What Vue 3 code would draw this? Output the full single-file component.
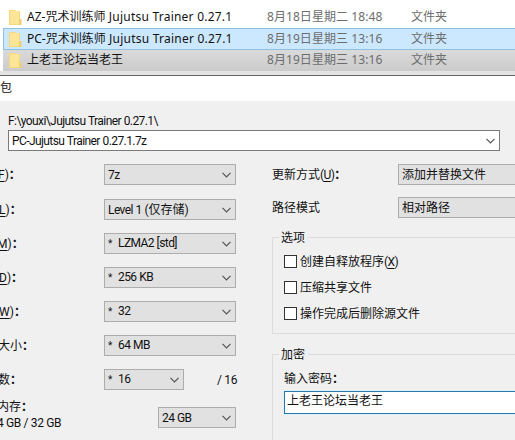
<template>
  <div class="screen">
    <div class="explorer">
      <div v-for="file in files" :key="file.name" class="file-row" :class="file.state">
        <svg class="folder" width="13" height="16" viewBox="0 0 13 16">
          <path d="M0 1h6l1 1h4v14H0z" fill="#f5d77e" />
          <path d="M1 2h9v13H1z" fill="#fce596" />
          <path d="M10 10h2.5v6H10z" fill="#efcf72" />
        </svg>
        <span class="file-name">{{ file.name }}<span class="file-latin">{{ file.latin }}</span></span>
        <span class="file-date">{{ file.date }}</span>
        <span class="file-type">文件夹</span>
      </div>
    </div>

    <div class="dialog">
      <div class="title-bar">包</div>

      <div class="archive">
        <div class="archive-path latin">F:\youxi\Jujutsu Trainer 0.27.1\</div>
        <div class="combo archive-name">
          <span class="latin">PC-Jujutsu Trainer 0.27.1.7z</span>
          <svg class="chevron" width="9" height="6" viewBox="0 0 9 6"><path d="M.5 .8l4 4 4-4" /></svg>
        </div>
      </div>

      <div class="columns">
        <div class="left">
          <div v-for="item in settings" :key="item.value" class="setting">
            <div class="setting-label" :style="{ marginLeft: item.offset + 'px' }">
              <u v-if="item.key">{{ item.key }}</u>{{ item.label }}<b>：</b>
            </div>
            <div class="combo" :class="{ short: item.suffix }">
              <span><i v-if="item.auto">*</i><span class="latin">{{ item.value }}</span><span v-if="item.note">({{ item.note }})</span></span>
              <svg class="chevron" width="9" height="6" viewBox="0 0 9 6"><path d="M.5 .8l4 4 4-4" /></svg>
            </div>
            <span v-if="item.suffix" class="suffix">{{ item.suffix }}</span>
          </div>

          <div class="memory">
            <div class="memory-label">
              <div>内存<b>：</b></div>
              <div class="memory-usage">4 GB / 32 GB</div>
            </div>
            <div class="combo memory-combo">
              <span class="latin">24 GB</span>
              <svg class="chevron" width="9" height="6" viewBox="0 0 9 6"><path d="M.5 .8l4 4 4-4" /></svg>
            </div>
          </div>
        </div>

        <div class="right">
          <div class="mode">
            <div class="mode-label">更新方式<span class="latin">(<u>U</u>)</span><b>：</b></div>
            <div class="combo">添加并替换文件</div>
          </div>
          <div class="mode">
            <div class="mode-label">路径模式</div>
            <div class="combo">相对路径</div>
          </div>

          <div class="group options">
            <div class="legend">选项</div>
            <label v-for="opt in options" :key="opt.text" class="check">
              <span class="box"></span>
              <span>{{ opt.text }}<span v-if="opt.key" class="latin">(<u>{{ opt.key }}</u>)</span></span>
            </label>
          </div>

          <div class="group encryption">
            <div class="legend">加密</div>
            <div class="password-label">输入密码<b>：</b></div>
            <div class="password">上老王论坛当老王</div>
          </div>
        </div>
      </div>
    </div>
  </div>
</template>

<script setup>
const files = [
  { name: 'AZ-咒术训练师', latin: ' Jujutsu Trainer 0.27.1', date: '8月18日星期二 18:48', state: '' },
  { name: 'PC-咒术训练师', latin: ' Jujutsu Trainer 0.27.1', date: '8月19日星期三 13:16', state: 'selected' },
  { name: '上老王论坛当老王', latin: '', date: '8月19日星期三 13:16', state: 'shaded' },
]

const settings = [
  { key: 'F', label: ')', offset: -2, value: '7z' },
  { key: 'L', label: ')', offset: -1, value: 'Level 1 ', note: '仅存储' },
  { key: 'M', label: ')', offset: -3, value: 'LZMA2 [std]', auto: true },
  { key: 'D', label: ')', offset: -1, value: '256 KB', auto: true },
  { key: 'W', label: ')', offset: -1, value: '32', auto: true },
  { label: '大小', offset: -2, value: '64 MB', auto: true },
  { label: '数', offset: -2, value: '16', auto: true, suffix: '/ 16' },
]

const options = [
  { text: '创建自释放程序', key: 'X' },
  { text: '压缩共享文件' },
  { text: '操作完成后删除源文件' },
]
</script>

<style>
body {
  overflow: hidden;
}
</style>

<style scoped>
.screen {
  box-sizing: border-box;
  width: 515px;
  height: 440px;
  overflow: hidden;
  background: #fff;
  color: #111;
  font-family: Roboto, "Noto Sans CJK SC", sans-serif;
  font-size: 12px;
  line-height: 16px;
  white-space: nowrap;
}

.screen * {
  box-sizing: border-box;
}

.latin {
  letter-spacing: -0.58px;
  word-spacing: 0.3px;
  white-space: pre;
}

u {
  text-underline-offset: 2px;
}

.explorer {
  height: 75px;
  padding: 6px 0 0 3px;
  background: linear-gradient(#fff 71px, #e4e4e4 71px);
  font-family: "Noto Sans", "Noto Sans CJK SC", sans-serif;
}

.file-row {
  display: flex;
  align-items: center;
  height: 22px;
  padding-left: 6px;
}

.file-row.selected {
  background: #cce8ff;
  border: 1px solid #8fc0e2;
  border-right: none;
  padding: 0 0 1px 5px;
}

.file-row.shaded {
  height: 21px;
  padding-bottom: 2px;
  background: linear-gradient(#dadada, #cbcbcb);
}

.folder {
  flex: none;
  margin-right: 5px;
}

.file-name {
  width: 240px;
}

.file-latin {
  letter-spacing: 0.23px;
  white-space: pre;
}

.file-date {
  width: 144px;
  color: #6d6d6d;
  letter-spacing: 0.07px;
}

.file-type {
  color: #6d6d6d;
}

.dialog {
  height: 365px;
  border-top: 1px solid #666;
  background: #f0f0f0;
}

.title-bar {
  height: 25px;
  padding-top: 4px;
  background: #fff;
}

.archive {
  padding: 12px 15px 0 8px;
}

.archive-path {
  height: 17px;
}

.combo {
  display: flex;
  align-items: center;
  justify-content: space-between;
  width: 132px;
  height: 21px;
  padding: 0 4px 0 3px;
  border: 1px solid #adadad;
  background: #e1e1e1;
}

.combo i {
  display: inline-block;
  width: 10px;
  font-size: 10px;
  font-style: normal;
}

.archive-name {
  width: 492px;
  border-color: #7a7a7a;
  background: #fff;
}

.chevron {
  fill: none;
  stroke: #555;
  stroke-width: 1.2;
}

.columns {
  display: flex;
  padding-top: 13px;
}

.left {
  flex: none;
  width: 272px;
}

.setting {
  display: flex;
  align-items: center;
  height: 21px;
  margin-bottom: 13px;
}

.setting:first-child {
  margin-bottom: 14px;
}

.setting-label {
  flex: none;
}

.setting .combo {
  flex: none;
  margin-left: auto;
  margin-right: 36px;
}

.setting .combo.short {
  width: 80px;
  margin-right: 0;
}

.suffix {
  width: 88px;
  padding-left: 33px;
  letter-spacing: -0.3px;
}

.memory {
  display: flex;
  justify-content: space-between;
  margin-top: -4px;
  padding-right: 36px;
}

.memory-label {
  margin-left: -3px;
}

.memory-usage {
  letter-spacing: -0.35px;
}

.memory-combo {
  width: 78px;
  margin-top: 8px;
}

.right {
  flex: none;
  width: 260px;
}

.mode {
  display: flex;
  align-items: center;
  margin-bottom: 12px;
}

.mode-label {
  width: 126px;
}

.group {
  border: 1px solid #dcdcdc;
  padding-left: 11px;
}

.legend {
  width: max-content;
  height: 16px;
  margin: -8px 0 0 -5px;
  padding: 0 3px 0 2px;
  background: #f0f0f0;
}

.options {
  height: 97px;
  margin-top: 19px;
}

.check {
  display: flex;
  align-items: center;
  height: 26px;
}

.legend + .check {
  margin-top: 3px;
}

.box {
  width: 13px;
  height: 13px;
  margin: 0 3px 1px 0;
  border: 1px solid #333;
  background: #fff;
}

.encryption {
  height: 120px;
  margin-top: 20px;
}

.password-label {
  margin-top: 8px;
}

.password {
  height: 23px;
  margin-top: 4px;
  padding: 1px 0 0 2px;
  border: 1px solid #2a78a8;
  background: #fff;
  box-shadow: 0 0 0 1px #dcf3fc;
}
</style>
